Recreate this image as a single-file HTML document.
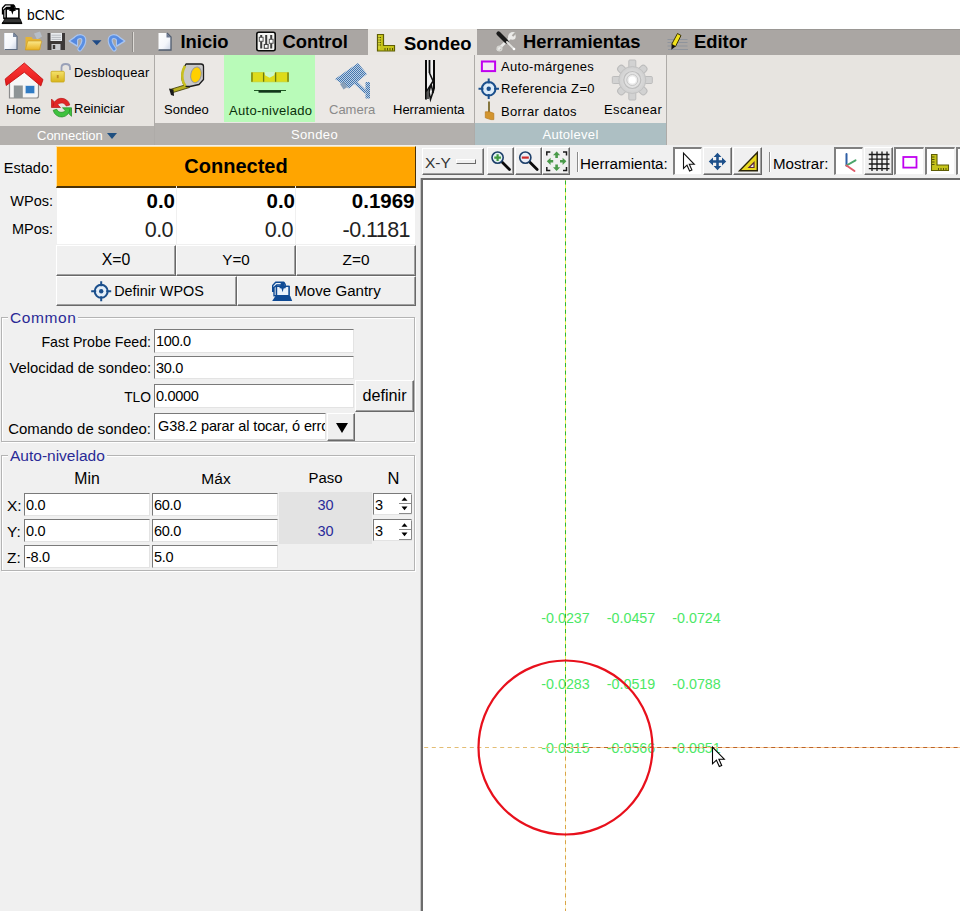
<!DOCTYPE html>
<html lang="es">
<head>
<meta charset="utf-8">
<title>bCNC</title>
<style>
*{box-sizing:border-box;margin:0;padding:0}
html,body{width:960px;height:911px;overflow:hidden;background:#f0f0f0}
body{position:relative;font-family:"Liberation Sans",sans-serif;font-size:12px;color:#000}
.abs{position:absolute}
#title{left:0;top:0;width:960px;height:29px;background:#fff}
#title .t{left:27px;top:7px;font-size:14.6px;line-height:17px;color:#000;transform:scaleX(.95);transform-origin:0 0}
#tabbar{left:0;top:29px;width:960px;height:26px;background:#aaa6a3;box-shadow:inset 0 1px 0 #9a9794}
.tab{position:absolute;top:0;height:26px;font-weight:bold;font-size:18.400px;line-height:26px;white-space:nowrap;color:#000}
#ribbon{left:0;top:55px;width:960px;height:90px;background:#e7e4e0}
.glabel{position:absolute;top:71px;height:19px;background:#b3b0ad;color:#fff;font-size:13px;line-height:20px;text-align:center;white-space:nowrap}
.rl{position:absolute;font-size:13px;line-height:15px;white-space:nowrap;color:#000}
.sep{position:absolute;top:0;width:2px;height:90px;background:#d6d3cf}
#left{left:0;top:145px;width:420px;height:766px;background:#f0f0f0}
.seg{position:absolute;font-family:"Liberation Sans",sans-serif;font-size:14.5px;line-height:17px;white-space:nowrap;color:#000}
.entry{position:absolute;background:#fff;border:1px solid #7a7a7a;border-right-color:#e3e3e3;border-bottom-color:#e3e3e3;font-size:14.500px;line-height:22px;padding-left:1px;letter-spacing:-.3px;white-space:nowrap;overflow:hidden}
.btn{position:absolute;background:#f0f0f0;border-right:1px solid #696969;border-bottom:1px solid #696969;border-top:1px solid #fff;border-left:1px solid #fff;box-shadow:inset -1px -1px 0 #a0a0a0;text-align:center;font-size:14.5px;white-space:nowrap}
.seg.r{text-align:right}.seg.c{text-align:center}
.dro{position:absolute;font-size:20px;line-height:24px;text-align:right;white-space:nowrap}
.dro.b{font-weight:bold;font-size:20.500px}.dro.n{font-size:21.500px;letter-spacing:-.55px;color:#222}
.vsep{position:absolute;top:7px;width:2px;height:20px;border-left:1px solid #8a8a8a;background:#fff}
.sunk{position:absolute;background:#fff;border-top:2px solid #808080;border-left:2px solid #808080;border-right:1px solid #f0f0f0;border-bottom:1px solid #f0f0f0}
.grp{position:absolute;border:1px solid #b4b4b4;box-shadow:1px 1px 0 #fff, inset 1px 1px 0 #fff}
.grp .cap{position:absolute;left:6px;top:-9px;background:#f0f0f0;padding:0 2px;color:#2a2a96;font-size:15.500px;line-height:17px;white-space:nowrap}
#canvas{left:421px;top:178px;width:539px;height:733px;background:#fff;border-left:2px solid #6c6c6c;border-top:2px solid #6c6c6c;box-shadow:-1px 0 0 #c4c4c4}
</style>
</head>
<body>
<div id="title" class="abs"><span class="abs t">bCNC</span></div>
<div id="tabbar" class="abs">
<div class="abs" style="left:368px;top:0;width:109px;height:26px;background:#e9e6e2"></div>
<span class="tab" style="left:180.500px">Inicio</span>
<span class="tab" style="left:282.500px">Control</span>
<span class="tab" style="left:404px;top:2px">Sondeo</span>
<span class="tab" style="left:523px">Herramientas</span>
<span class="tab" style="left:694px">Editor</span>
</div>
<div id="ribbon" class="abs">
<div class="abs" style="left:155px;top:0;width:319px;height:68px;background:#ebe8e5"></div>
<div class="abs" style="left:475px;top:0;width:191px;height:68px;background:#ebe8e5"></div>
<div class="abs" style="left:224px;top:0;width:91px;height:67px;background:#b9fbb9"></div>
<div class="glabel" style="left:0;width:154px;text-align:left;padding-left:37px">Connection<span class="abs" style="left:107px;top:7px;width:0;height:0;border-left:5px solid transparent;border-right:5px solid transparent;border-top:6px solid #1f4f80"></span></div>
<div class="abs" style="left:154px;top:0;width:1px;height:90px;background:#aeaba8"></div>
<div class="glabel" style="left:155px;width:319px;top:68px;height:22px;line-height:24px;letter-spacing:.4px">Sondeo</div>
<div class="abs" style="left:474px;top:0;width:1px;height:90px;background:#aeaba8"></div>
<div class="glabel" style="left:475px;width:191px;top:68px;height:22px;line-height:24px;background:#adbfc3;letter-spacing:.3px">Autolevel</div>
<div class="abs" style="left:666px;top:0;width:1px;height:90px;background:#aeaba8"></div>
<span class="rl" style="left:6px;top:47px">Home</span>
<span class="rl" style="left:74px;top:10px;letter-spacing:.15px">Desbloquear</span>
<span class="rl" style="left:74px;top:45.500px">Reiniciar</span>
<span class="rl" style="left:164px;top:47px">Sondeo</span>
<span class="rl" style="left:229px;top:48px;color:#0a300a;letter-spacing:.3px">Auto-nivelado</span>
<span class="rl" style="left:329px;top:47px;color:#8a8a8a">Camera</span>
<span class="rl" style="left:393px;top:47px">Herramienta</span>
<span class="rl" style="left:501px;top:4px;letter-spacing:.33px">Auto-márgenes</span>
<span class="rl" style="left:501px;top:26px;letter-spacing:.33px">Referencia Z=0</span>
<span class="rl" style="left:501px;top:49px;letter-spacing:.36px">Borrar datos</span>
<span class="rl" style="left:604px;top:46.500px;letter-spacing:.4px">Escanear</span>
</div>
<div id="left" class="abs">
<span class="seg r" style="left:0;width:53px;top:14.500px">Estado:</span>
<div class="abs" style="left:56px;top:1px;width:360px;height:42px;background:#ffa500;border-top:1px solid #ffe2a0;border-left:1px solid #ffe2a0;border-bottom:2px solid #4a3208;border-right:1px solid #4a3208;text-align:center;font-weight:bold;font-size:20px;line-height:39px">Connected</div>
<div class="abs" style="left:57px;top:43px;width:358px;height:56px;background:#fff"></div>
<span class="seg r" style="left:0;width:53px;top:48px">WPos:</span>
<span class="seg r" style="left:0;width:53px;top:76px">MPos:</span>
<div class="abs" style="left:176px;top:41px;width:1px;height:58px;background:#f0f0f0"></div>
<div class="abs" style="left:295px;top:41px;width:1px;height:58px;background:#f0f0f0"></div>
<span class="dro b" style="left:57px;width:118px;top:43.500px">0.0</span>
<span class="dro b" style="left:177px;width:118px;top:43.500px">0.0</span>
<span class="dro b" style="left:296px;width:118.500px;top:43.500px">0.1969</span>
<span class="dro n" style="left:57px;width:116px;top:73px">0.0</span>
<span class="dro n" style="left:177px;width:116px;top:73px">0.0</span>
<span class="dro n" style="left:296px;width:114px;top:73px">-0.1181</span>
<div class="btn" style="left:56px;top:100px;width:120px;height:31px;line-height:27px;font-size:15.800px">X=0</div>
<div class="btn" style="left:176px;top:100px;width:120px;height:31px;line-height:27px;font-size:15.200px">Y=0</div>
<div class="btn" style="left:296px;top:100px;width:120px;height:31px;line-height:27px;font-size:15.400px">Z=0</div>
<div class="btn" style="left:56px;top:131px;width:181px;height:30px;line-height:29px;font-size:14.400px"><span style="padding-left:25px">Definir WPOS</span></div>
<div class="btn" style="left:237px;top:131px;width:179px;height:30px;line-height:27px;font-size:15.100px"><span style="padding-left:22px">Move Gantry</span></div>

<div class="grp" style="left:1px;top:172px;width:414px;height:125px"><span class="cap" style="letter-spacing:.6px">Common</span></div>
<span class="seg r" style="left:0;width:151px;top:189px;font-size:14.200px">Fast Probe Feed:</span>
<span class="seg r" style="left:0;width:151px;top:215px;font-size:14.800px">Velocidad de sondeo:</span>
<span class="seg r" style="left:0;width:151px;top:243.500px;font-size:13.800px">TLO</span>
<span class="seg r" style="left:0;width:151px;top:275px;font-size:14.950px">Comando de sondeo:</span>
<div class="entry" style="left:154px;top:184px;width:200px;height:24px">100.0</div>
<div class="entry" style="left:154px;top:211px;width:200px;height:23px">30.0</div>
<div class="entry" style="left:154px;top:239px;width:200px;height:24px">0.0000</div>
<div class="btn" style="left:355px;top:235px;width:59px;height:32px;line-height:28px;font-size:16.200px">definir</div>
<div class="entry" style="left:154px;top:268px;width:172px;height:27px;line-height:25px;padding-left:3px;letter-spacing:-.1px">G38.2 parar al tocar, ó error</div>
<div class="btn" style="left:327px;top:268px;width:28px;height:28px"><span class="abs" style="left:8px;top:9px;width:0;height:0;border-left:6.500px solid transparent;border-right:6.500px solid transparent;border-top:10.500px solid #000"></span></div>

<div class="grp" style="left:1px;top:310px;width:414px;height:116px"><span class="cap">Auto-nivelado</span></div>
<span class="seg c" style="left:24px;width:126px;top:325px;font-size:15.800px">Min</span>
<span class="seg c" style="left:153px;width:126px;top:325px;font-size:15.500px">Máx</span>
<span class="seg c" style="left:279px;width:93px;top:325px;font-size:14.900px">Paso</span>
<span class="seg c" style="left:373px;width:41px;top:325px;font-size:16.500px">N</span>
<span class="seg" style="left:7px;top:352px;font-size:15.500px">X:</span>
<span class="seg" style="left:7px;top:378px;font-size:15.500px">Y:</span>
<span class="seg" style="left:7px;top:404px;font-size:15.500px">Z:</span>
<div class="entry" style="left:24px;top:348px;width:126px;height:23px">0.0</div>
<div class="entry" style="left:152px;top:348px;width:126px;height:23px">60.0</div>
<div class="entry" style="left:24px;top:374px;width:126px;height:23px">0.0</div>
<div class="entry" style="left:152px;top:374px;width:126px;height:23px">60.0</div>
<div class="entry" style="left:24px;top:400px;width:126px;height:23px">-8.0</div>
<div class="entry" style="left:152px;top:400px;width:126px;height:23px">5.0</div>
<div class="abs" style="left:279px;top:347px;width:93px;height:52px;background:#e3e3e3"></div>
<span class="seg c" style="left:279px;width:93px;top:352px;color:#2a2a9a">30</span>
<span class="seg c" style="left:279px;width:93px;top:378px;color:#2a2a9a">30</span>
<div class="entry" style="left:373px;top:348px;width:39px;height:22px">3</div>
<div class="entry" style="left:373px;top:374px;width:39px;height:22px">3</div>
</div>
<div id="ctb" class="abs" style="left:421px;top:145px;width:539px;height:32px">
<div class="btn" style="left:1px;top:3px;width:62px;height:27px;line-height:28px;text-align:left;padding-left:2px;font-size:15.500px;color:#333">X-Y</div>
<div class="abs" style="left:35px;top:14px;width:20px;height:5px;border-top:1px solid #fff;border-left:1px solid #fff;border-right:1px solid #696969;border-bottom:1px solid #696969;background:#f0f0f0"></div>
<div class="btn" style="left:66px;top:2px;width:27px;height:28px"></div>
<div class="btn" style="left:94px;top:2px;width:27px;height:28px"></div>
<div class="btn" style="left:121px;top:2px;width:28px;height:28px"></div>
<div class="vsep" style="left:156px"></div>
<span class="seg" style="left:159px;top:10px;font-size:15.200px">Herramienta:</span>
<div class="sunk" style="left:252px;top:2px;width:29px;height:28px"></div>
<div class="btn" style="left:282px;top:2px;width:29px;height:28px"></div>
<div class="btn" style="left:312px;top:2px;width:29px;height:28px"></div>
<div class="vsep" style="left:348px"></div>
<span class="seg" style="left:352px;top:10px;font-size:15.100px">Mostrar:</span>
<div class="sunk" style="left:413px;top:2px;width:29px;height:28px"></div>
<div class="btn" style="left:443px;top:2px;width:29px;height:28px"></div>
<div class="sunk" style="left:473px;top:2px;width:30px;height:28px"></div>
<div class="sunk" style="left:504px;top:2px;width:30px;height:28px"></div>
<div class="sunk" style="left:535px;top:2px;width:30px;height:28px"></div>
</div>
<div id="canvas" class="abs">
<svg class="abs" style="left:0;top:0" width="537" height="731" viewBox="423 180 537 731" font-family="'Liberation Sans',sans-serif">
<g fill="#4ce866" font-size="14.300px" text-anchor="middle">
<text x="565.500" y="622.500">-0.0237</text><text x="631" y="622.500">-0.0457</text><text x="696.500" y="622.500">-0.0724</text>
<text x="565.500" y="688.500">-0.0283</text><text x="631" y="688.500">-0.0519</text><text x="696.500" y="688.500">-0.0788</text>
<text x="565.500" y="753">-0.0315</text><text x="631" y="753">-0.0566</text><text x="696.500" y="753">-0.0851</text>
</g>
<line x1="565.500" y1="748" x2="565.500" y2="911" stroke="#fff6cc" stroke-width="1"/>
<line x1="565.500" y1="749" x2="565.500" y2="911" stroke="#d9a446" stroke-width="1" stroke-dasharray="4 3.600"/>
<line x1="565" y1="747.500" x2="423" y2="747.500" stroke="#e3bd74" stroke-width="1" stroke-dasharray="4 3.600"/>
<line x1="565.500" y1="747" x2="565.500" y2="180" stroke="#eef25a" stroke-width="1"/>
<line x1="565.500" y1="747" x2="565.500" y2="180" stroke="#2fb52f" stroke-width="1" stroke-dasharray="4 3.600"/>
<line x1="566" y1="747.500" x2="960" y2="747.500" stroke="#ffcb96" stroke-width="1"/>
<line x1="566" y1="747.500" x2="960" y2="747.500" stroke="#b9642a" stroke-width="1" stroke-dasharray="4 3.600"/>
<circle cx="565.500" cy="747.500" r="87" fill="none" stroke="#e8101c" stroke-width="2.200"/>
<path d="M712.500 747 v16.800 l3.900 -3.700 l2.900 6.400 l2.400 -1.100 l-2.800 -6.200 h5.400z" fill="#fff" stroke="#000" stroke-width="1.100"/>
</svg>
</div>
<!-- ICONS: title + tab row -->
<svg class="abs" style="left:0;top:0" width="960" height="56" viewBox="0 0 960 56">
<defs>
<linearGradient id="gdoc" x1="0" y1="0" x2="1" y2="1"><stop offset="0" stop-color="#ffffff"/><stop offset="0.6" stop-color="#f4f6fb"/><stop offset="1" stop-color="#c9d2e4"/></linearGradient>
<linearGradient id="gfold" x1="0" y1="0" x2="0" y2="1"><stop offset="0" stop-color="#fbe88a"/><stop offset="1" stop-color="#e8b020"/></linearGradient>
<linearGradient id="gblue" x1="0" y1="0" x2="0" y2="1"><stop offset="0" stop-color="#8fb4ee"/><stop offset="1" stop-color="#3a6fd0"/></linearGradient>
</defs>
<!-- bCNC title icon -->
<g>
<path d="M2.5 14.5 V8 L5.5 4.8 H13.5 L15 7 V9 H18.8 V18 H6.3 V9 H11 V7.5 H6.5 L3.8 10 V18.5 L6 18" fill="#fff" stroke="#000" stroke-width="1.3" stroke-linejoin="round"/>
<path d="M6.3 9 H18.8 V18.2 H6.3z" fill="#fff" stroke="#000" stroke-width="1.3"/>
<path d="M10.5 5 H14.5 V9 L16 10.5 L13.4 11.2 L12.4 14.8 L11.3 11.2 L8.8 10.5 L10.5 9z" fill="#000"/>
<path d="M5.2 18.6 H20 L22 23.6 H2z" fill="#333" stroke="#000" stroke-width="0.8"/>
<path d="M2 22.4 H22 V23.8 H2z" fill="#000"/>
</g>
<!-- new -->
<path d="M4.5 33 H13.5 L17 36.5 V49.5 H4.5z" fill="url(#gdoc)"/>
<path d="M13.5 33 L17 36.5 V49.5 H4.5" fill="none" stroke="#5d6b80" stroke-width="1.2"/>
<path d="M13 33 v4 h4z" fill="#7c8aa2"/>
<path d="M4.5 33 V49.5" stroke="#dfe4ee" stroke-width="1"/>
<!-- open folder -->
<path d="M34 33.5 l6 -2 l2 5 l-5 3z" fill="#b9c2cf" opacity=".85"/>
<path d="M25.5 37 h6 l1.5 2 h7.5 v10.5 h-15z" fill="#e5b437"/>
<path d="M27.8 41 h14 l-2.5 9 h-14z" fill="url(#gfold)" stroke="#c8951c" stroke-width=".6"/>
<!-- floppy -->
<path d="M47.5 33 h17.5 v17 h-17.5z" fill="#3c3838"/>
<path d="M50.5 33 h11.5 v8 h-11.5z" fill="#e9ebee"/>
<path d="M51.5 35.2 h9.5 M51.5 37.4 h9.5 M51.5 39.4 h9.5" stroke="#a9adb5" stroke-width=".8"/>
<path d="M51.5 44 h9 v6 h-9z" fill="#c9cbd0"/>
<path d="M52.8 45 h2.4 v4 h-2.4z" fill="#3c3838"/>
<!-- undo -->
<g fill="none" stroke-linecap="round">
<path d="M76.500 38.300 C79.500 35.200 84.300 36.400 83.800 41 C83.500 44.500 81.500 47 79.800 49" stroke="#a9c5f1" stroke-width="5"/>
<path d="M69.300 41 L77.300 35.300 V46z" fill="#a9c5f1" stroke="#a9c5f1" stroke-width="1.500" stroke-linejoin="round"/>
<path d="M76.500 38.300 C79.500 35.200 84.300 36.400 83.800 41 C83.500 44.500 81.500 47 79.800 49" stroke="#5a8fe3" stroke-width="2.800"/>
<path d="M70.300 41 L77 36.500 V45z" fill="#5488e0" stroke="none"/>
</g>
<path d="M92 40.200 h9.500 l-4.750 5z" fill="#1f4a86"/>
<!-- redo -->
<g fill="none" stroke-linecap="round">
<path d="M117.500 38.300 C114.500 35.200 109.700 36.400 110.200 41 C110.500 44.500 112.500 47 114.200 49" stroke="#a9c5f1" stroke-width="5"/>
<path d="M124.700 41 L116.700 35.300 V46z" fill="#a9c5f1" stroke="#a9c5f1" stroke-width="1.500" stroke-linejoin="round"/>
<path d="M117.500 38.300 C114.500 35.200 109.700 36.400 110.200 41 C110.500 44.500 112.500 47 114.200 49" stroke="#5a8fe3" stroke-width="2.800"/>
<path d="M123.700 41 L117 36.500 V45z" fill="#5488e0" stroke="none"/>
</g>
<path d="M132.500 32 v20" stroke="#8d8a87" stroke-width="1"/><path d="M133.500 32 v20" stroke="#dedbd7" stroke-width="1"/>
<!-- Inicio doc -->
<path d="M158.500 33 H167 L171 37 V50 H158.500z" fill="url(#gdoc)"/>
<path d="M167 33 L171 37 V50 H158.500" fill="none" stroke="#4f5b6e" stroke-width="1.300"/>
<path d="M166.500 33 v4.500 h4.500z" fill="#6c7890"/>
<!-- Control -->
<rect x="256.800" y="32.300" width="18.400" height="18.400" rx="2" fill="#f4f4f2" stroke="#0a0a0a" stroke-width="1.600"/>
<path d="M261.200 35 v13.500 M266.200 35 v9.500 M271.200 35 v13.500" stroke="#3c3c3c" stroke-width="2"/>
<rect x="259.300" y="37.300" width="3.800" height="4" fill="#fff" stroke="#555" stroke-width="1"/>
<rect x="264.300" y="44.500" width="3.800" height="3.800" fill="#fff" stroke="#444" stroke-width="1.100"/>
<rect x="269.300" y="39.300" width="3.800" height="4" fill="#fff" stroke="#555" stroke-width="1"/>
<!-- Sondeo L ruler -->
<path d="M377.500 34.500 h6 v11 h11 v5.500 h-17z" fill="#c6c41a" stroke="#5f5e05" stroke-width="1.200"/>
<path d="M378 37.500 h3 M378 40 h3 M378 42.500 h3 M378 45 h3 M385 48 v2.500 M387.500 48 v2.500 M390 48 v2.500 M392.500 48 v2.500" stroke="#55540a" stroke-width="1"/>
<path d="M379 35.500 v13.500" stroke="#eaea50" stroke-width="1.200" opacity=".7"/>
<!-- Herramientas tools -->
<path d="M514.500 33.500 c-3 -1 -6 1.500 -5 5 L498 49.500" fill="none" stroke="#e9e9e7" stroke-width="2.600" stroke-linecap="round"/>
<circle cx="512.500" cy="36.500" r="3.200" fill="#ecebe9"/>
<path d="M512.500 36 l3.500 -3.500" stroke="#aba8a4" stroke-width="2"/>
<circle cx="499.500" cy="48.500" r="2.300" fill="none" stroke="#d6d6d2" stroke-width="1.500"/>
<path d="M498.500 33.500 L506.500 41.500" stroke="#1a1a1a" stroke-width="4.200" stroke-linecap="round"/>
<path d="M507 42 L513.500 48.500" stroke="#e3e3e0" stroke-width="1.800" stroke-linecap="round"/>
<circle cx="514" cy="49" r="1.300" fill="#fff"/>
<!-- Editor pencil -->
<path d="M667.500 39.500 h20 M667.500 42.500 h20 M667.500 46 h20 M668 49.500 h20" stroke="#8f949c" stroke-width="1"/>
<path d="M677.500 33.500 l3.500 2 l-5.500 11 l-3.800 -2.200z" fill="#f2e21a" stroke="#3a3205" stroke-width="1"/>
<path d="M671.700 44.300 l3.800 2.200 l-4.200 3.300z" fill="#111"/>
</svg>
<!-- ICONS: ribbon -->
<svg class="abs" style="left:0;top:55px" width="960" height="90" viewBox="0 55 960 90">
<defs>
<pattern id="stip" width="2" height="2" patternUnits="userSpaceOnUse"><rect width="2" height="2" fill="#bdd0e6"/><rect width="1" height="1" fill="#4577ad"/><rect x="1" y="1" width="1" height="1" fill="#4577ad"/></pattern>
<linearGradient id="groof" x1="0" y1="0" x2="0" y2="1"><stop offset="0" stop-color="#ff3b3b"/><stop offset="1" stop-color="#e01818"/></linearGradient>
<linearGradient id="glock" x1="0" y1="0" x2="0" y2="1"><stop offset="0" stop-color="#f5e26a"/><stop offset="1" stop-color="#d8b41c"/></linearGradient>
<radialGradient id="ggear" cx=".5" cy=".5" r=".5"><stop offset="0" stop-color="#ededed"/><stop offset="1" stop-color="#cfcfcf"/></radialGradient>
</defs>
<!-- Home -->
<path d="M9.500 82 L24.300 70 L38.500 82 V96 q0 2 -2 2 H9.500z" fill="#f6f6f6" stroke="#8c8c8c" stroke-width="1.200"/>
<rect x="13.800" y="85.500" width="9" height="12.500" fill="#8d9496"/>
<rect x="25.200" y="85.500" width="9.600" height="8.200" fill="#2f7bc4" stroke="#dfe9f2" stroke-width=".8"/>
<path d="M24.300 63 L43 79.500 L40.800 86 L24.300 72.200 L6.200 85.500 L5.200 79z" fill="url(#groof)" stroke="#c41414" stroke-width=".9" stroke-linejoin="round"/>
<!-- Unlock -->
<path d="M61.500 71.500 v-4 q0 -3.500 4.200 -3.500 q4.300 0 4.300 3.500 v2.500" fill="none" stroke="#9aa1b8" stroke-width="1.800"/>
<rect x="51" y="71.300" width="13.300" height="10.700" rx="1" fill="url(#glock)" stroke="#c9a81c" stroke-width=".8"/>
<rect x="56.800" y="75" width="1.800" height="3.200" fill="#c08a20"/>
<!-- Restart -->
<path d="M53 106.500 a8.500 8.500 0 0 1 16.800 -1.500 l-3.600 1 a5 5 0 0 0 -8.500 -1.200 l2.800 2.700 h-9 v-8.500 l2.800 2.800" fill="#e22626" stroke="#b81616" stroke-width=".7"/>
<path d="M70 108.800 a8.500 8.500 0 0 1 -16.800 1.500 l3.600 -1 a5 5 0 0 0 8.500 1.200 l-2.800 -2.700 h9 v8.500 l-2.800 -2.800" fill="#3fc23f" stroke="#218a21" stroke-width=".7"/>
<!-- Sondeo tape -->
<path d="M170 89.500 L188 84 L189.500 87.500 L173 92.500z" fill="#b8b020" stroke="#3a3600" stroke-width=".8"/>
<path d="M169 88.500 l4.500 1 l0.500 6.500 l-3 -1z" fill="#1a1a1a"/>
<path d="M186 64 h15 q2.500 0 2.500 2.500 v13 l-4.500 5 l-9 2 h-3.500 q-4 -2 -4.500 -8 q-.5 -8 4 -14.500z" fill="#c9c9c9" stroke="#1c1c1c" stroke-width="1.300" stroke-linejoin="round"/>
<path d="M185 66 q-3.500 6 -2.500 13 q.5 4 3 7" fill="none" stroke="#c8c020" stroke-width="2.600"/>
<ellipse cx="196" cy="74.800" rx="5.200" ry="8" fill="#ffd000" stroke="#9a9a9a" stroke-width="1" transform="rotate(12 196 74.800)"/>
<!-- Auto-nivelado level -->
<path d="M251.500 72.500 H288.500 V81.800 H251.500z" fill="#dedb1a" stroke="#c9c81e" stroke-width=".6"/><path d="M264.300 72 H275 L274.200 75.300 L269.600 77.800 L265 75.300z" fill="#c9f9cf"/>
<path d="M252 72.500 v9.300 M263.600 72.500 v9.300 M275.600 72.500 v9.300 M288 72.500 v9.300" stroke="#6a7a10" stroke-width="1.300"/>
<path d="M254 90.500 h32" stroke="#1f5a24" stroke-width="1"/>
<path d="M258.500 91.500 h22.500" stroke="#12351a" stroke-width="2.400"/>
<!-- Camera (disabled) -->
<path d="M358 63 L367 74 L349 88.500 L335 79z" fill="url(#stip)"/>
<path d="M340 84 l4 -2.500 l3.500 5.500 l-4 2.500z" fill="#8aa0b8"/>
<path d="M354 83.500 l2.500 -2.500 l10.500 10 l-2.500 2.500z" fill="url(#stip)"/>
<path d="M365.500 82 h4.500 v16.500 h-4.500z" fill="url(#stip)"/>
<!-- Herramienta endmill -->
<path d="M425.500 60 H434.500 V88 L431.500 99.500 H425.500z" fill="#f2f2f2"/>
<path d="M426 60 V99.500" stroke="#0a0a0a" stroke-width="2"/>
<path d="M434 60 V88 L432.600 93" stroke="#0a0a0a" stroke-width="2" fill="none"/>
<path d="M429.500 60 V73" stroke="#0a0a0a" stroke-width="1.800"/>
<path d="M429.500 73 L433.500 82 M433.800 80 L427.500 90 L426.500 99 M431 84 L433 92 L430.500 99.500 L429 92z" stroke="#111" stroke-width="1.600" fill="none"/>
<path d="M426.500 92 l2.500 -3 v10 h-2.500z" fill="#555"/>
<!-- Auto-margenes -->
<rect x="481.900" y="61.500" width="13.200" height="9.600" fill="#f3e9f3" stroke="#c000f0" stroke-width="2"/>
<!-- Referencia crosshair -->
<g stroke="#1b4f8c" fill="none">
<circle cx="488.700" cy="88.800" r="6.800" fill="#dcebf8" stroke-width="2"/>
<path d="M488.700 78.500 v5 M488.700 94 v5 M478.500 88.800 h5 M494 88.800 h5" stroke-width="2"/>
</g>
<circle cx="488.700" cy="88.800" r="2.200" fill="#1b4f8c"/>
<!-- Borrar brush -->
<path d="M489 101.500 V112.500" stroke="#7c6a2c" stroke-width="1.800"/>
<path d="M485.300 111.800 h4.500 l4 1.500 v6.300 h-3 l-5.500 -1.800z" fill="#d3952f" stroke="#b87a1c" stroke-width=".7"/>
<!-- Escanear gear -->
<g transform="translate(632.300 80)">
<g fill="#d2d2d2" stroke="#bcbcbc" stroke-width="1">
<rect x="-3.500" y="-20" width="7" height="40" rx="1"/>
<rect x="-20" y="-3.500" width="40" height="7" rx="1"/>
<rect x="-3.500" y="-19" width="7" height="38" rx="3" transform="rotate(45)"/>
<rect x="-3.500" y="-19" width="7" height="38" rx="3" transform="rotate(-45)"/>
</g>
<circle r="13.500" fill="url(#ggear)" stroke="#c2c2c2" stroke-width="1"/>
<circle r="8.500" fill="#e2e2e2" stroke="#bdbdbd" stroke-width="1.200"/>
<circle r="5.500" fill="#ececec" stroke="#c6c6c6" stroke-width="1"/>
<circle r="3.600" fill="#ffffff"/>
</g>
</svg>
<!-- ICONS: left panel + canvas toolbar -->
<svg class="abs" style="left:0;top:145px" width="960" height="435" viewBox="0 145 960 435">
<!-- Definir WPOS crosshair -->
<g stroke="#1b4f8c" fill="none">
<circle cx="101.200" cy="291.300" r="6.500" fill="#e4eef8" stroke-width="2"/>
<path d="M101.200 281.300 v5 M101.200 296.300 v5 M91.200 291.300 h5 M106.200 291.300 h5" stroke-width="2"/>
</g>
<circle cx="101.200" cy="291.300" r="2.200" fill="#1b4f8c"/>
<!-- Move Gantry -->
<g transform="translate(270.200 277.400)">
<path d="M2.500 14.500 V8 L5.500 4.800 H13.500 L15 7 V9 H18.800 V18 H6.300 V9 H11 V7.500 H6.500 L3.800 10 V18.500 L6 18" fill="#eaf2fb" stroke="#0f4a94" stroke-width="1.400" stroke-linejoin="round"/>
<path d="M6.300 9 H18.800 V18.200 H6.300z" fill="#eaf2fb" stroke="#0f4a94" stroke-width="1.400"/>
<path d="M10.500 5 H14.500 V9 L16 10.500 L13.400 11.200 L12.400 14.800 L11.300 11.200 L8.800 10.500 L10.500 9z" fill="#0f4a94"/>
<path d="M5.200 18.600 H20 L22 23.600 H2z" fill="#0f4a94"/>
</g>
<!-- spin arrows -->
<g fill="#000">
<path d="M401.500 500.800 h6 l-3 -3.600z M401.500 506.600 h6 l-3 3.600z"/>
<path d="M401.500 526.800 h6 l-3 -3.600z M401.500 532.600 h6 l-3 3.600z"/>
</g>
<path d="M399 503.500 h12 M399 529.500 h12 M399 513.500 h12.500 v-19 M399 539.500 h12.500 v-19" stroke="#8a8a8a" stroke-width="1" fill="none"/>
<path d="M399 504.500 h12 M399 530.500 h12" stroke="#fff" stroke-width="1"/>
<!-- zoom in -->
<g>
<path d="M502 162 L509.500 169.500" stroke="#0a0a0a" stroke-width="2.800" stroke-linecap="round"/>
<circle cx="497.600" cy="157.600" r="5.600" fill="#e3f1f1" stroke="#1c3f6a" stroke-width="1.600"/>
<path d="M494.300 157.600 h6.600 M497.600 154.300 v6.600" stroke="#3f9a3f" stroke-width="2.200"/>
<path d="M529.700 162 L537.200 169.500" stroke="#0a0a0a" stroke-width="2.800" stroke-linecap="round"/>
<circle cx="525.300" cy="157.600" r="5.600" fill="#e9eef6" stroke="#1c3f6a" stroke-width="1.600"/>
<path d="M521.800 157.600 h7" stroke="#d02a2a" stroke-width="2.200"/>
</g>
<!-- fit -->
<g fill="none" stroke="#1a1a1a" stroke-width="1.500">
<path d="M546.800 155.500 v-3.500 h3.500 M563 152 h3.500 v3.500 M566.500 167 v3.500 h-3.500 M550.300 170.500 h-3.500 v-3.500"/>
</g>
<g fill="#4a9a4a">
<path d="M556.600 151.500 l3.600 3.800 h-2.300 v2.600 h-2.600 v-2.600 h-2.300z"/>
<path d="M556.600 171 l3.600 -3.800 h-2.300 v-2.600 h-2.600 v2.600 h-2.300z"/>
<path d="M546.800 161.300 l3.800 -3.600 v2.300 h2.600 v2.600 h-2.600 v2.300z"/>
<path d="M566.400 161.300 l-3.800 -3.600 v2.300 h-2.600 v2.600 h2.600 v2.300z"/>
</g>
<!-- select arrow -->
<path d="M683.500 153 v15.500 l3.500 -3.300 l2.600 5.800 l2.300 -1 l-2.600 -5.700 h5z" fill="#fff" stroke="#111" stroke-width="1.100" stroke-linejoin="miter"/>
<!-- move -->
<path d="M717.500 152.800 L721.400 157.000 L718.800 157.000 L718.800 160.200 L722.000 160.200 L722.000 157.600 L726.200 161.500 L722.000 165.400 L722.000 162.800 L718.800 162.800 L718.800 166.000 L721.400 166.000 L717.500 170.200 L713.600 166.000 L716.200 166.000 L716.200 162.800 L713.000 162.800 L713.000 165.400 L708.800 161.500 L713.000 157.600 L713.000 160.200 L716.200 160.200 L716.200 157.000 L713.600 157.000z" fill="#1c4f8a"/>
<!-- set square -->
<path d="M739.500 170.800 H757.300 V152.500z" fill="#e8d820" stroke="#2a2408" stroke-width="1.400" stroke-linejoin="miter"/>
<path d="M749 167.500 H754 V162.500z" fill="#f0f0f0" stroke="#5a2a3a" stroke-width="1.200"/>
<!-- axes -->
<path d="M846.500 154 V165.500" stroke="#2f5fa5" stroke-width="2" stroke-linecap="round"/>
<path d="M846.500 165.500 L855.500 160.300" stroke="#4aa56a" stroke-width="2" stroke-linecap="round"/>
<path d="M846.500 165.500 L854.500 171" stroke="#e05a6a" stroke-width="2" stroke-linecap="round"/>
<!-- grid -->
<path d="M872 151.500 v19.500 M877 151.500 v19.500 M882 151.500 v19.500 M887 151.500 v19.500 M868.800 154.500 h20.700 M868.800 159.200 h20.700 M868.800 164 h20.700 M868.800 168.700 h20.700" stroke="#1a1a1a" stroke-width="1.300"/>
<!-- margins -->
<rect x="903.300" y="157" width="13.200" height="10.600" fill="#fff" stroke="#c000f0" stroke-width="1.800"/>
<!-- probe L -->
<path d="M931.500 154.500 h5.500 v10.500 h11.500 v5.500 h-17z" fill="#c6c41a" stroke="#5f5e05" stroke-width="1.100"/>
<path d="M932 157 h2.500 M932 159.500 h2.500 M932 162 h2.500 M932 164.500 h2.500 M938.500 168 v2 M941 168 v2 M943.500 168 v2 M946 168 v2" stroke="#55540a" stroke-width="1"/>
</svg>
</body>
</html>
